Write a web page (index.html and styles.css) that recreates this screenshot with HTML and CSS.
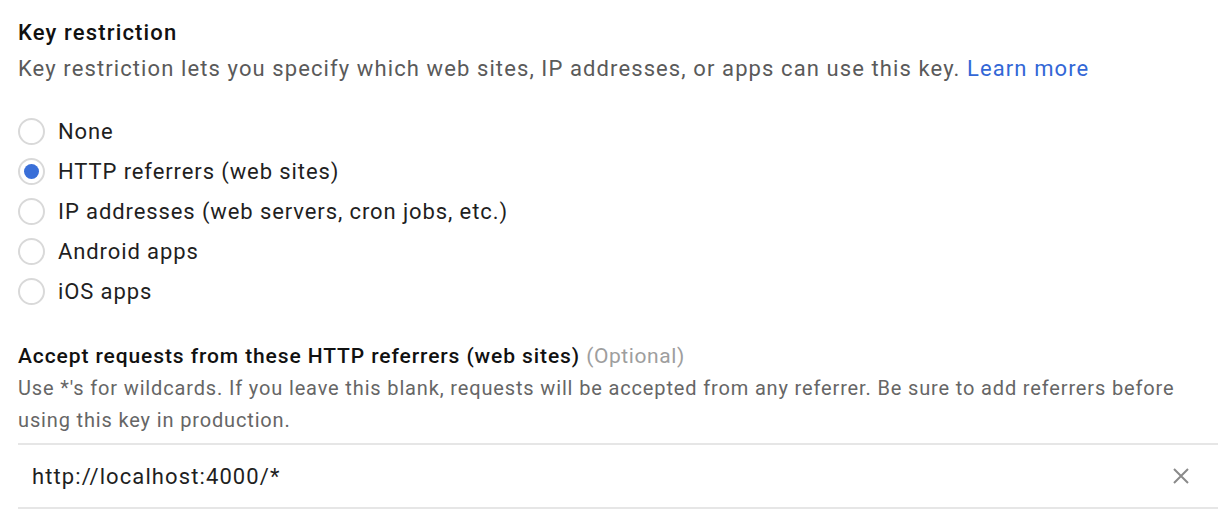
FILE: index.html
```html
<!DOCTYPE html>
<html>
<head>
<meta charset="utf-8">
<link rel="stylesheet" href="styles.css">
</head>
<body>
<div class="page">
  <h2 class="title">Key restriction</h2>
  <p class="desc">Key restriction lets you specify which web sites, IP addresses, or apps can use this key. <a class="link" href="#">Learn more</a></p>
  <div class="radios">
    <label class="radio"><span class="dot"></span><span>None</span></label>
    <label class="radio checked"><span class="dot"></span><span>HTTP referrers (web sites)</span></label>
    <label class="radio"><span class="dot"></span><span>IP addresses (web servers, cron jobs, etc.)</span></label>
    <label class="radio"><span class="dot"></span><span>Android apps</span></label>
    <label class="radio"><span class="dot"></span><span>iOS apps</span></label>
  </div>
  <h3 class="subtitle">Accept requests from these HTTP referrers (web sites) <span class="optional">(Optional)</span></h3>
  <p class="help">Use *'s for wildcards. If you leave this blank, requests will be accepted from any referrer. Be sure to add referrers before using this key in production.</p>
  <div class="field">
    <span class="value">http://localhost:4000/*</span>
    <svg class="clear" width="18" height="18" viewBox="0 0 18 18"><path d="M2 2 L16 16 M16 2 L2 16" stroke="#8a8a8a" stroke-width="2" fill="none"/></svg>
  </div>
</div>
</body>
</html>
```
FILE: styles.css
```css
html, body { margin: 0; padding: 0; background: #fff; }
body { font-family: Roboto, "Noto Sans", sans-serif; }
.page { padding: 18px 6px 0 18px; }
.title { margin: 0; font-size: 22px; font-weight: 500; color: #111; line-height: 30px; letter-spacing: 1.15px; }
.desc { margin: 6px 0 0; font-size: 22px; color: #5a5a5a; line-height: 30px; letter-spacing: 1.1px; }
.link { color: #3367d6; text-decoration: none; }
.radios { margin-top: 27px; display: flex; flex-direction: column; }
.radio { display: flex; align-items: center; height: 40px; font-size: 22px; color: #1f1f1f; gap: 13px; letter-spacing: 0.9px; }
.dot { width: 23px; height: 23px; border: 2px solid #d9d9d9; border-radius: 50%; box-sizing: content-box; display: flex; align-items: center; justify-content: center; }
.checked .dot::after { content: ""; width: 15px; height: 15px; border-radius: 50%; background: #3a6fd8; }
.subtitle { margin: 29px 0 0; font-size: 21px; font-weight: 500; color: #111; line-height: 32px; letter-spacing: 0.9px; }
.optional { font-weight: 400; color: #9e9e9e; letter-spacing: 0.6px; }
.help { margin: 0; font-size: 20px; color: #666; line-height: 32px; letter-spacing: 0.85px; }
.field { margin-top: 7px; border-top: 2px solid #e6e6e6; border-bottom: 2px solid #e6e6e6; height: 62px; display: flex; align-items: center; justify-content: space-between; padding: 0 28px 0 14px; }
.value { font-size: 22px; color: #1f1f1f; letter-spacing: 1.1px; }
.clear { display: block; }
```
